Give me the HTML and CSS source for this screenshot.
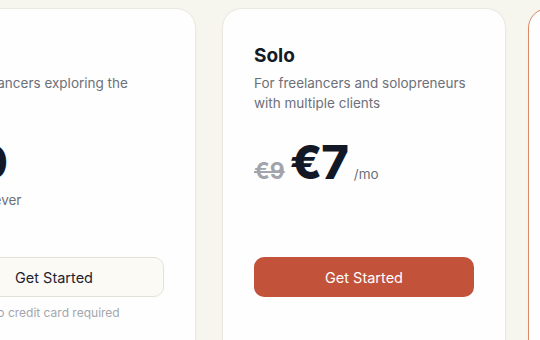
FILE: index.html
```html
<!DOCTYPE html>
<html>
<head>
<meta charset="utf-8">
<link rel="stylesheet" href="styles.css">
</head>
<body>
<div class="row">
  <div class="card">
    <h3 class="name">Free</h3>
    <p class="desc">For freelancers exploring the platform</p>
    <div class="price"><span class="amount">€0</span></div>
    <p class="note">Free forever</p>
    <a class="btn btn-light">Get Started</a>
    <p class="fine">No credit card required</p>
  </div>
  <div class="card">
    <h3 class="name">Solo</h3>
    <p class="desc">For freelancers and solopreneurs with multiple clients</p>
    <div class="price"><span class="old">€9</span><span class="amount">€7</span><span class="per">/mo</span></div>
    <p class="note"></p>
    <a class="btn btn-primary">Get Started</a>
  </div>
  <div class="card card-featured">
    <h3 class="name">Pro</h3>
  </div>
</div>
</body>
</html>
```

FILE: styles.css
```css
* { box-sizing: border-box; }
html, body { margin: 0; padding: 0; }
body {
  background: #f7f6ee;
  font-family: Inter, "Noto Sans", sans-serif;
  width: 540px;
  height: 340px;
  overflow: hidden;
}
.row {
  display: flex;
  gap: 26px;
  margin-left: -88px;
  padding-top: 8px;
}
.card {
  flex: 0 0 284px;
  height: 360px;
  background: #fefefe;
  border: 1px solid #ebe8df;
  border-radius: 20px;
  padding: 33px 31px;
  display: flex;
  flex-direction: column;
  box-shadow: 0 1px 3px rgba(0,0,0,0.03);
}
.card-featured {
  margin-left: -4px;
  border-color: #dc8a66;
}
.name {
  margin: 0;
  font-size: 19px;
  font-weight: 700;
  color: #151a26;
  line-height: 28px;
}
.desc {
  margin: 3px 0 0;
  font-size: 13.5px;
  line-height: 20px;
  color: #6d7079;
  height: 40px;
}
.price {
  margin-top: 21px;
  display: flex;
  align-items: baseline;
  height: 56px;
}
.amount {
  font-size: 47px;
  font-weight: 800;
  color: #121826;
  letter-spacing: -1px;
  line-height: 56px;
}
.old {
  font-size: 23px;
  font-weight: 700;
  color: #a2a4ab;
  text-decoration: line-through;
  text-decoration-thickness: 2px;
  margin-right: 5px;
}
.per {
  font-size: 13.5px;
  color: #6d7079;
  margin-left: 6px;
}
.note {
  margin: 0;
  font-size: 13.5px;
  color: #6d7079;
  line-height: 20px;
  height: 20px;
}
.btn {
  display: flex;
  align-items: center;
  justify-content: center;
  height: 40px;
  margin-top: 47px;
  border-radius: 10px;
  font-size: 14.5px;
  font-weight: 400;
}
.btn-light {
  background: #fbfaf5;
  border: 1px solid #e4e1d8;
  color: #1e2230;
}
.btn-primary {
  background: #c2533a;
  color: #ffffff;
}
.fine {
  margin: 8px 0 0;
  text-align: center;
  font-size: 12px;
  color: #a4a6ad;
}
```
